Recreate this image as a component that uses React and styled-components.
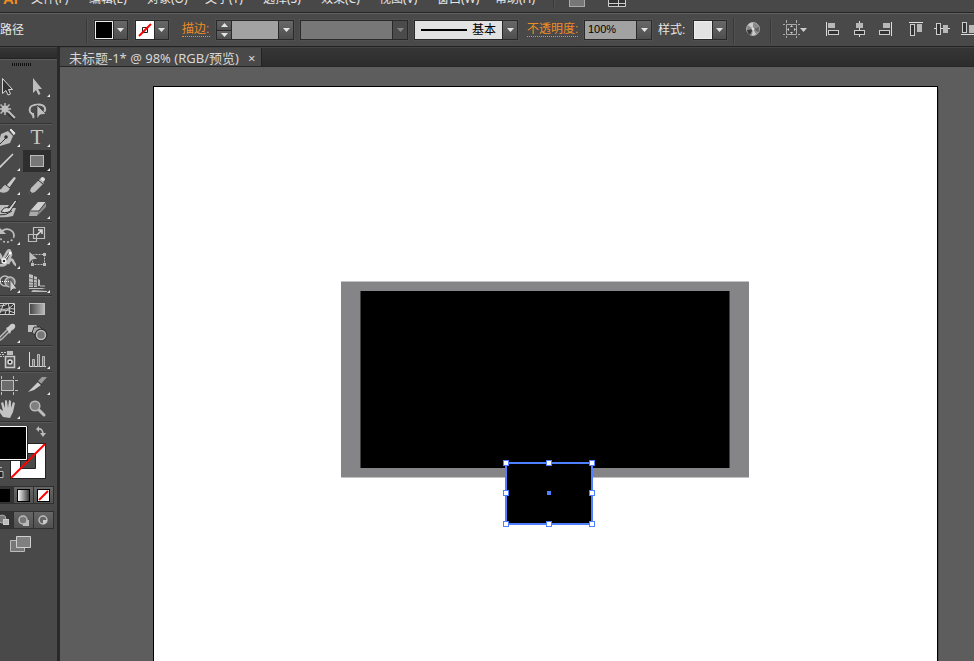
import React, { useState } from 'react';
import styled, { createGlobalStyle, css } from 'styled-components';

const GlobalStyle = createGlobalStyle`
    body {
        margin: 0;
        background: #5d5d5d;
        overflow: hidden;
    }

    * {
        box-sizing: border-box;
    }

    button, input, select {
        margin: 0;
        padding: 0;
        border: 0;
        border-radius: 0;
        background: none;
        color: inherit;
        font: inherit;
        appearance: none;
    }

    svg {
        display: block;
        flex: none;
    }
`;

const Window = styled.div`
    height: 100vh;
    display: flex;
    flex-direction: column;
    color: #e6e6e6;
    font-family: "Liberation Sans", "Noto Sans CJK SC", sans-serif;
    font-size: 12px;
    line-height: 16px;
`;

/* menu bar */

const MenuBar = styled.header`
    height: 13px;
    flex: none;
    display: flex;
    align-items: flex-end;
    padding: 0 0 5px 3px;
    overflow: hidden;
    background: #484848;
    border-bottom: 1px solid #242424;
`;

const Logo = styled.span`
    width: 28px;
    color: #f28c1e;
    font-size: 15px;
    font-weight: bold;
`;

const MenuItem = styled.button`
    width: 58px;
    flex: none;
    text-align: left;
    font-family: "Noto Sans", "Noto Sans CJK SC", sans-serif;
    line-height: 16px;
    white-space: nowrap;
`;

const BarIcon = styled.button`
    flex: none;
    margin-left: ${({ $gap }) => $gap}px;
`;

/* control bar */

const ControlBar = styled.section`
    height: 34px;
    flex: none;
    display: flex;
    align-items: center;
    gap: 6px;
    overflow: hidden;
    background: #494949;
    border-top: 1px solid #626262;
    border-bottom: 1px solid #222;
`;

const Label = styled.label`
    flex: none;
    width: ${({ $width }) => $width}px;
    white-space: nowrap;
`;

const LinkLabel = styled.a`
    flex: none;
    margin-left: ${({ $gap }) => $gap || 0}px;
    width: ${({ $width }) => $width}px;
    line-height: 13px;
    color: #f08c26;
    text-decoration: none;
    border-bottom: 1px dotted #f08c26;
    white-space: nowrap;
`;

const Divider = styled.span`
    flex: none;
    width: 2px;
    height: 25px;
    background: #383838;
    border-right: 1px solid #525252;
`;

const Field = styled.div`
    flex: none;
    display: flex;
    width: ${({ $width }) => $width}px;
    height: 20px;
    margin-left: ${({ $gap }) => $gap || 0}px;
    border: 1px solid #292929;
    background: ${({ $tone }) => $tone || '#a2a2a2'};
    color: #000;
    outline: 1px solid #505050;

    input, select {
        flex: 1;
        min-width: 0;
        padding-left: 3px;
        line-height: 16px;
    }

    input {
        padding-bottom: 2px;
        font-size: 11px;
    }
`;

const Swatch = styled.span`
    flex: none;
    width: 18px;
    border: 1px solid #eee;
    background: ${({ $color }) => $color};
`;

const Drop = styled.button`
    flex: 0 1 15px;
    min-width: 0;
    display: flex;
    align-items: center;
    justify-content: center;
    border-left: 1px solid #292929;
    background: ${({ $off }) => ($off ? '#4b4b4b' : 'linear-gradient(#686868, #4e4e4e)')};
    color: ${({ $off }) => ($off ? '#858585' : '#e4e4e4')};
`;

const Spinner = styled.div`
    width: 15px;
    display: flex;
    flex-direction: column;
    border-right: 1px solid #292929;

    button {
        flex: 1;
        display: flex;
        align-items: center;
        justify-content: center;
        background: linear-gradient(#646464, #505050);
        color: #e4e4e4;
    }

    button + button {
        border-top: 1px solid #292929;
    }
`;

const BrushLine = styled.span`
    align-self: center;
    width: 46px;
    height: 2px;
    margin: 0 2px 0 6px;
    background: #000;
`;

const IconButton = styled.button`
    flex: none;
    width: 20px;
    height: 20px;
    margin-left: ${({ $gap }) => $gap || 0}px;
`;

/* work area */

const Body = styled.div`
    flex: 1;
    min-height: 0;
    display: flex;
`;

const ToolPanel = styled.aside`
    width: 60px;
    flex: none;
    overflow: hidden;
    background: #494949;
    border-right: 3px solid #292929;
`;

const PanelHead = styled.div`
    height: 12px;
    background: linear-gradient(#363636, #2c2c2c);
    border-top: 1px solid #444;
    border-bottom: 1px solid #222;
`;

const Grip = styled.div`
    height: 16px;
    padding: 3px 0 0 12px;
    border-top: 1px solid #5c5c5c;

    &::before {
        content: '';
        display: block;
        width: 19px;
        height: 3px;
        background: repeating-linear-gradient(90deg, #111 0 1px, #494949 1px 2px);
    }
`;

const ToolGroup = styled.div`
    display: grid;
    grid-template-columns: 30px 30px;
    margin: 0 5px 0 -8px;
    border-bottom: 1px solid #585858;
    box-shadow: inset 0 -1px #333;
    padding-bottom: 1px;
`;

const ToolButton = styled.button`
    height: 24px;

    ${({ $active }) => $active && css`
        background: #2e2e2e;
        background-clip: content-box;
        padding: 1px;

        svg {
            margin: -1px;
        }
    `}
`;

const FillStroke = styled.button`
    display: block;
`;

const ModeRow = styled.div`
    display: flex;
    width: 54px;
    height: 18px;
    margin-top: 7px;
    border: 1px solid #303030;
    border-left: 0;
`;

const Mode = styled.button`
    flex: none;
    width: ${({ $first }) => ($first ? 13 : 20)}px;
    display: flex;
    align-items: center;
    justify-content: ${({ $first }) => ($first ? 'flex-start' : 'center')};
    overflow: hidden;
    background: ${({ $first }) => ($first ? '#343434' : 'linear-gradient(#666, #515151)')};

    & + & {
        border-left: 1px solid #303030;
    }
`;

const ScreenMode = styled.button`
    margin: 6px 0 0 9px;
`;

const Documents = styled.main`
    flex: 1;
    min-width: 0;
    display: flex;
    flex-direction: column;
`;

const TabStrip = styled.div`
    height: 20px;
    flex: none;
    display: flex;
    background: linear-gradient(#363636, #2c2c2c);
    border-top: 1px solid #444;
    border-bottom: 1px solid #262626;
`;

const Tab = styled.div`
    display: flex;
    align-items: center;
    gap: 9px;
    padding: 2px 6px 0 9px;
    background: #494949;
    border-right: 1px solid #222;
    color: #d6d6d6;
    font-family: "Noto Sans", "Noto Sans CJK SC", sans-serif;
    font-size: 13px;
    white-space: nowrap;
`;

const Canvas = styled.div`
    flex: 1;
    min-height: 0;
    display: flex;
    padding: 19px 36px 0 93px;
    background: #5d5d5d;
`;

const Artboard = styled.div`
    flex: 1;
    min-width: 0;
    overflow: hidden;
    background: #fff;
    border: 1px solid #000;
    border-bottom: 0;
    box-shadow: 1px 3px #4a4a4a;
`;

const Down = ({ up }) => (
    <svg width="7" height="4" viewBox="0 0 7 4" fill="currentColor">
        <path d={up ? 'M0 4L3.500 0L7 4z' : 'M0 0H7L3.500 4z'} />
    </svg>
);

const Corner = () => <path d="M28 19v3h-3z" fill="#e8e8e8" />;

const G = '#bdbdbd';
const D = '#303030';

const tools = [
    [
        { name: '选择工具', art: <path d="M10.500 3.500v15l3.500-3 2 4.500 2.500-1-2-4.500h4z" fill="#333" stroke="#d6d6d6" /> },
        { name: '直接选择工具', corner: true, art: <path d="M11 3v15l3-3 2.500 5 2-1-2.300-5H20z" fill={G} /> },
        {
            name: '魔棒工具', art: <>
                <path d="M13 4v12M7 10h12M8.500 5.500l9 9M17.500 5.500l-9 9" stroke={G} strokeWidth="1.500" />
                <circle cx="13" cy="10" r="3.500" fill={G} />
                <path d="M16 13l7 7" stroke={D} strokeWidth="4" />
                <path d="M16 12l7 7" stroke={G} strokeWidth="2.200" />
            </>
        },
        {
            name: '套索工具', art: <>
                <path d="M12 15c-4 0-5-3-4-6 1.500-4 13-5 15 0 .7 3-.5 4-3 5M9 13c0 3 4 2 2 6" fill="none" stroke={G} strokeWidth="2" />
                <path d="M15 6v14l3-4 6-1z" fill={G} stroke={D} strokeWidth=".6" />
            </>
        },
    ],
    [
        {
            name: '钢笔工具', corner: true, art: <>
                <path d="M6 20l3-11 7-3 5 5-3 7-10 3z" fill={G} />
                <path d="M17 5l2-2 5 5-2 3z" fill="#ddd" stroke={D} strokeWidth=".7" />
                <path d="M7 20l7-7" stroke={D} /><circle cx="14" cy="12" r="1.800" fill={D} />
            </>
        },
        { name: '文字工具', corner: true, art: <text x="15" y="19" textAnchor="middle" fontFamily="Liberation Serif, serif" fontSize="21" fill="#c8c8c8">T</text> },
        { name: '直线段工具', corner: true, art: <path d="M7 19L21 5" stroke="#d0d0d0" strokeWidth="1.600" /> },
        { name: '矩形工具', corner: true, art: <rect x="8.500" y="6.500" width="13" height="11" fill="#777" stroke="#bbb" /> },
        {
            name: '画笔工具', corner: true, art: <>
                <path d="M14 13L22 4l2 1-7 10z" fill="#ccc" />
                <path d="M15 12c-5-1-4 5-9 5 2 4 10 4 12-2z" fill={G} />
                <path d="M14 12l4 3" stroke={D} />
            </>
        },
        {
            name: '铅笔工具', corner: true, art: <>
                <path d="M7 21l2-6 9-9 4 4-9 9z" fill={G} />
                <path d="M18 6l2-2q3 0 3 3l-2 2z" fill="#ddd" />
                <path d="M16 7l5 4" stroke={D} />
                <path d="M7 21l1-3 2 2z" fill={D} />
            </>
        },
        {
            name: '斑点画笔工具', art: <>
                <path d="M3 8h14l-2 3h9l-3 8q-8 2-15 1z" fill={G} />
                <path d="M9 15q3-6 8-4l6-8 2 1-6 9q-3 4-10 2z" fill="#d2d2d2" stroke={D} strokeWidth="1" />
                <path d="M6 18q8 1 14-4" fill="none" stroke={D} />
            </>
        },
        {
            name: '橡皮擦工具', corner: true, art: <>
                <path d="M8 14l8-9h8l-7 9z" fill="#d0d0d0" />
                <path d="M8 14h9l-2 5H7z" fill="#aaa" />
                <path d="M17 14l7-9v5l-9 9z" fill="#8c8c8c" />
                <path d="M8 14h9l7-9" fill="none" stroke="#444" />
            </>
        },
    ],
    [
        {
            name: '旋转工具', corner: true, art: <>
                <path d="M10 8c5-4 12-1 12 5" fill="none" stroke={G} strokeWidth="1.800" />
                <path d="M22 13c-1 7-12 9-14 1" fill="none" stroke={G} strokeWidth="1.600" strokeDasharray="2 2" />
                <path d="M8 5v6h6z" fill={G} />
            </>
        },
        {
            name: '比例缩放工具', corner: true, art: <>
                <path d="M11.500 4.500h11v11h-11zM6.500 11.500h8v7h-8z" fill="none" stroke={G} strokeWidth="1.200" />
                <path d="M15 12l4-4M16 7h4v4" fill="none" stroke="#e0e0e0" strokeWidth="1.500" />
            </>
        },
        {
            name: '宽度工具', corner: true, art: <>
                <path d="M4 7q4-2 5 3t5-3 5 1l-3 6q-4 7-11 3M16 17q3-7 5-3t3 4" fill="none" stroke={G} strokeWidth="2.600" />
                <path d="M12 14l6-8" stroke="#fff" />
                <circle cx="12" cy="14" r="2" fill={D} stroke="#fff" strokeWidth="1.300" />
                <circle cx="18" cy="6" r="1.500" fill="#fff" />
            </>
        },
        {
            name: '自由变换工具', art: <>
                <rect x="10.500" y="7.500" width="12" height="10" fill="none" stroke={G} strokeDasharray="2 1" />
                <path d="M21 6h3v3h-3zM9 16h3v3H9zM21 16h3v3h-3z" fill={G} />
                <path d="M7 4v13l3-4 6-1z" fill={G} stroke={D} strokeWidth=".7" />
            </>
        },
        {
            name: '形状生成器工具', corner: true, art: <>
                <circle cx="13" cy="10" r="5" fill="none" stroke={G} strokeWidth="1.500" />
                <circle cx="18" cy="11" r="5" fill="#777" stroke={G} strokeWidth="1.500" />
                <path d="M6 10.500h14" stroke="#fff" strokeDasharray="1 1" />
                <path d="M18 8v13l3-3h4z" fill="#ccc" stroke={D} strokeWidth=".7" />
            </>
        },
        {
            name: '透视网格工具', corner: true, art: <>
                <path d="M7 3l4 1v12H7zM12 5l3 1v10h-3zM16 8l2 1v6h-2z" fill={G} />
                <path d="M7 17h13l4 1H7zM11 19l14 1v1H9z" fill={G} />
                <path d="M7 7l8 2M7 11l8 1M7 14h9" stroke="#555" strokeWidth=".8" />
                <path d="M18 15h5" stroke={G} />
            </>
        },
    ],
    [
        {
            name: '网格工具', art: <>
                <rect x="7" y="6" width="16" height="12" fill="#333" />
                <path d="M7.500 6.500h15v11h-15zM8 9q6 0 8-3M8 12q8 2 14-5M13 18q0-8 10-6M8 16l4-10M17 18q2-5-1-12M8 14q8-2 15 2" fill="none" stroke="#d0d0d0" />
            </>
        },
        { name: '渐变工具', art: <rect x="7.500" y="6.500" width="15" height="11" fill="url(#toolFade)" stroke={G} /> },
        {
            name: '吸管工具', corner: true, art: <>
                <path d="M7 20l1-4 8-8 2 2-8 8z" fill="#555" stroke={G} strokeWidth="1.300" />
                <path d="M14 7l2-1 3-3q3-1 4 1t-1 4l-3 2-1 3z" fill="#ccc" />
            </>
        },
        {
            name: '混合工具', art: <>
                <path d="M6 4h8l1 1v6H6z" fill={G} />
                <path d="M12 6h6l3 3v6h-6l-5-3z" fill="#aaa" stroke={D} />
                <circle cx="19" cy="14" r="5" fill="#777" stroke={D} strokeWidth="3" />
                <circle cx="19" cy="14" r="4.500" fill="#777" stroke={G} strokeWidth="1.500" />
            </>
        },
    ],
    [
        {
            name: '符号喷枪工具', corner: true, art: <>
                <path d="M13.500 9.500h9v11h-9z" fill="#555" stroke="#ccc" strokeWidth="1.500" />
                <path d="M15 4h6v4h-6z" fill={G} />
                <circle cx="18" cy="15" r="2" fill="#222" stroke="#ddd" strokeWidth="1.500" />
                <path d="M6 5.500h8M7 7.500h6M8 9.500h4" stroke="#ccc" strokeDasharray="2 1" />
            </>
        },
        {
            name: '柱形图工具', corner: true, art: <>
                <path d="M7.500 5v14.500H24" fill="none" stroke="#ddd" />
                <path d="M10.500 12.500h2v7h-2zM15.500 7.500h2v12h-2zM20.500 9.500h2v10h-2z" fill="#777" stroke="#bbb" />
            </>
        },
    ],
    [
        {
            name: '画板工具', art: <>
                <rect x="9.500" y="7.500" width="12" height="10" fill="#6c6c6c" stroke={G} />
                <path d="M9.500 3v3M21.500 3v3M9.500 19v3M21.500 19v3M5 7.500h3M23 7.500h3M5 17.500h3M23 17.500h3" stroke={G} />
            </>
        },
        {
            name: '切片工具', corner: true, art: <>
                <path d="M6 19l10-10 3 3-7 5z" fill="#ccc" />
                <path d="M16 8l4-4h5l-6 7z" fill="#999" />
                <path d="M15 8l5 4" stroke={D} />
            </>
        },
        {
            name: '抓手工具', corner: true, art: <path d="M11 20l-5-7 1-2 4 3-2-8 2-1 2 6V4q1-2 2 0l1 7 1-8 2 1v7l2-6 2 1-2 9-3 6z" fill="#c4c4c4" />
        },
        {
            name: '缩放工具', art: <>
                <path d="M17 13l5 5" stroke={G} strokeWidth="3" strokeLinecap="round" />
                <circle cx="13" cy="9" r="4.800" fill="#808080" stroke="#bbb" strokeWidth="1.500" />
            </>
        },
    ],
];

const aligns = [
    { name: '水平左对齐', art: <path d="M2.500 2v14" stroke="#ddd" />, a: [4, 3, 7, 4], b: [4, 10, 11, 4] },
    { name: '水平居中对齐', art: <path d="M9.500 1v16" stroke="#ddd" />, a: [6, 3, 7, 4], b: [4, 10, 11, 4] },
    { name: '水平右对齐', art: <path d="M15.500 2v14" stroke="#ddd" />, a: [7, 3, 7, 4], b: [3, 10, 11, 4] },
    { name: '垂直顶对齐', gap: 5, art: <path d="M2 2.500h14" stroke="#ddd" />, a: [10, 4, 5, 7], b: [3, 4, 5, 11] },
    { name: '垂直居中对齐', art: <path d="M1 8.500h16" stroke="#ddd" />, a: [10, 5, 5, 7], b: [3, 3, 5, 11] },
    { name: '垂直底对齐', art: <path d="M2 14.500h15" stroke="#ddd" />, a: [10, 5, 5, 7], b: [3, 2, 5, 10] },
];

const menus = ['文件(F)', '编辑(E)', '对象(O)', '文字(T)', '选择(S)', '效果(C)', '视图(V)', '窗口(W)', '帮助(H)'];

function Controls() {
    const [opacity, setOpacity] = useState('100%');
    const [weight, setWeight] = useState('');

    return (
        <ControlBar>
            <Label as="span" $width={80}>路径</Label>
            <Divider />
            <Field as="button" $width={34} aria-label="填色">
                <Swatch $color="#000" />
                <Drop as="span"><Down /></Drop>
            </Field>
            <Field as="button" $width={34} $gap={1} aria-label="描边颜色">
                <svg width="18" height="18" viewBox="0 0 18 18">
                    <path d="M0 0h18v18H0z" fill="#fff" />
                    <path d="M6.500 6.500h5v5h-5z" fill="#fff" stroke="#222" />
                    <path d="M3 15L15 3" stroke="#f00" strokeWidth="2" />
                </svg>
                <Drop as="span"><Down /></Drop>
            </Field>
            <LinkLabel href="#stroke" $gap={7} $width={28}>描边:</LinkLabel>
            <Field $width={78}>
                <Spinner>
                    <button aria-label="增加"><Down up /></button>
                    <button aria-label="减少"><Down /></button>
                </Spinner>
                <input aria-label="描边粗细" value={weight} onChange={(e) => setWeight(e.target.value)} />
                <Drop aria-label="描边粗细选项"><Down /></Drop>
            </Field>
            <Field $width={108} $tone="#777">
                <select aria-label="变量宽度配置文件" disabled />
                <Drop as="span" $off><Down /></Drop>
            </Field>
            <Field $width={104} $tone="#e2e2e2">
                <BrushLine />
                <select aria-label="画笔定义"><option>基本</option></select>
                <Drop as="span"><Down /></Drop>
            </Field>
            <LinkLabel href="#opacity" $gap={3} $width={51}>不透明度:</LinkLabel>
            <Field $width={68}>
                <input aria-label="不透明度" value={opacity} onChange={(e) => setOpacity(e.target.value)} />
                <Drop aria-label="不透明度选项"><Down /></Drop>
            </Field>
            <Label htmlFor="style" $width={29}>样式:</Label>
            <Field as="button" id="style" $width={34}>
                <Swatch $color="#e2e2e2" />
                <Drop as="span"><Down /></Drop>
            </Field>
            <Divider />
            <IconButton $gap={3} aria-label="重新着色图稿">
                <svg width="20" height="20" viewBox="0 0 20 20">
                    <circle cx="9" cy="9" r="6.500" fill="#8a8a8a" stroke="#aaa" />
                    <path d="M9 9L4 5q3-3 5-2zM9 9l3 5q-2 2-4 1z" fill="#ccc" />
                    <path d="M9 9l-6 1q0 3 3 5z" fill="#3a3a3a" />
                    <path d="M9 9l6-2q1 4-1 5z" fill="#666" />
                    <circle cx="9" cy="9" r="1.500" fill="#ddd" />
                </svg>
            </IconButton>
            <Divider />
            <IconButton $gap={5} aria-label="对齐所选对象">
                <svg width="26" height="20" viewBox="0 0 26 20" overflow="visible">
                    <path d="M3.500 4.500h10v10h-10zM3.500 0v3M13.500 0v3M3.500 16v2M13.500 16v2M0 4.500h2M15 4.500h2M0 14.500h2M15 14.500h2" stroke="#aaa" fill="none" />
                    <path d="M7 7h3L8.500 5zM7 12h3l-1.500 2zM6 8v3L4 9.500zM11 8v3l2-1.500z" fill="#ccc" />
                    <path d="M17 8h7l-3.500 4z" fill="#ccc" />
                </svg>
            </IconButton>
            {aligns.map((item, i) => (
                <IconButton key={item.name} $gap={i === 0 ? 15 : item.gap} aria-label={item.name}>
                    <svg width="20" height="20" viewBox="0 0 20 20">
                        {item.art}
                        <rect x={item.a[0]} y={item.a[1]} width={item.a[2]} height={item.a[3] + 1} fill="#b8b8b8" />
                        <rect x={item.b[0] + 0.5} y={item.b[1] + 0.5} width={item.b[2] - 1} height={item.b[3]} fill="#333" stroke="#ccc" />
                    </svg>
                </IconButton>
            ))}
        </ControlBar>
    );
}

function Tools() {
    const [active, setActive] = useState('矩形工具');

    return (
        <ToolPanel>
            <PanelHead />
            <Grip />
            {tools.map((group) => (
                <ToolGroup key={group[0].name}>
                    {group.map((tool) => (
                        <ToolButton
                            key={tool.name}
                            aria-label={tool.name}
                            $active={tool.name === active}
                            onClick={() => setActive(tool.name)}
                        >
                            <svg width="30" height="24" viewBox="0 0 30 24">
                                <defs>
                                    <linearGradient id="toolFade"><stop stopColor="#444" /><stop offset="1" stopColor="#bbb" /></linearGradient>
                                </defs>
                                {tool.art}
                                {tool.corner && <Corner />}
                            </svg>
                        </ToolButton>
                    ))}
                </ToolGroup>
            ))}
            <FillStroke aria-label="填色和描边">
                <svg width="52" height="56" viewBox="0 0 52 56">
                    <path d="M10 20h36v36H10z" fill="#222" />
                    <path d="M11 21h34v34H11z" fill="#fff" />
                    <path d="M20.500 30.500h15v15h-15z" fill="#494949" stroke="#222" />
                    <path d="M11 55L45 21" stroke="#f00" strokeWidth="2" />
                    <path d="M0 3h28v35H0z" fill="#222" />
                    <path d="M-2 3.500h28.500v33H-2z" fill="#000" stroke="#fff" />
                    <path d="M38 6q5-1 5 6" fill="none" stroke="#bbb" strokeWidth="1.500" />
                    <path d="M39 3v6l-3-3zM40 10h6l-3 4z" fill="#bbb" />
                    <path d="M0 44.500h2M-2 48.500h5v6h-5z" fill="#222" stroke="#bbb" />
                </svg>
            </FillStroke>
            <ModeRow>
                <Mode $first aria-label="颜色"><svg width="10" height="13"><rect width="10" height="13" fill="#000" /></svg></Mode>
                <Mode aria-label="渐变">
                    <svg width="13" height="13">
                        <defs><linearGradient id="modeFade"><stop stopColor="#fff" /><stop offset="1" stopColor="#333" /></linearGradient></defs>
                        <rect x=".5" y=".5" width="12" height="12" fill="url(#modeFade)" stroke="#000" />
                    </svg>
                </Mode>
                <Mode aria-label="无">
                    <svg width="13" height="13"><rect x=".5" y=".5" width="12" height="12" fill="#fff" stroke="#000" /><path d="M2 11l9-9" stroke="#f00" strokeWidth="2" /></svg>
                </Mode>
            </ModeRow>
            <ModeRow>
                <Mode $first aria-label="正常绘图"><svg width="12" height="13"><circle cx="2" cy="5" r="4" fill="#777" stroke="#aaa" /><rect x="3.500" y="5.500" width="5" height="5" fill="#bbb" stroke="#ccc" /></svg></Mode>
                <Mode aria-label="背面绘图"><svg width="13" height="13"><rect x="6" y="6" width="6" height="6" fill="#bbb" /><circle cx="6" cy="6" r="4" fill="#777" stroke="#bbb" strokeWidth="1.500" /></svg></Mode>
                <Mode aria-label="内部绘图"><svg width="13" height="13"><circle cx="6" cy="6" r="4" fill="#666" stroke="#bbb" strokeWidth="1.500" /><path d="M6 6h4v1q-1 3-4 3z" fill="#ccc" /></svg></Mode>
            </ModeRow>
            <ScreenMode aria-label="更改屏幕模式">
                <svg width="24" height="19" viewBox="0 0 24 19">
                    <path d="M1.500 5.500h14v11h-14z" fill="#777" stroke="#bbb" />
                    <path d="M7.500 1.500h14v11h-14z" fill="#808080" stroke="#d0d0d0" />
                </svg>
            </ScreenMode>
        </ToolPanel>
    );
}

const handles = [[352, 376], [395, 376], [438, 376], [352, 406], [438, 406], [352, 437], [395, 437], [438, 437]];

function Drawing() {
    return (
        <svg width="783" height="574" viewBox="0 0 783 574">
            <rect x="187" y="194.500" width="408" height="196" fill="#858587" />
            <rect x="206.500" y="204" width="369" height="177" fill="#000" />
            <rect x="352" y="376" width="86" height="61" fill="#000" stroke="#4f80ff" strokeWidth="2" />
            <rect x="393" y="404" width="4" height="4" fill="#4f80ff" />
            {handles.map(([x, y]) => (
                <rect key={`${x}-${y}`} x={x - 2.5} y={y - 2.5} width="5" height="5" fill="#fff" stroke="#4f80ff" />
            ))}
        </svg>
    );
}

function App() {
    return (
        <Window>
            <GlobalStyle />
            <MenuBar>
                <Logo>Ai</Logo>
                {menus.map((menu) => <MenuItem key={menu}>{menu}</MenuItem>)}
                <Divider />
                <BarIcon $gap={14} aria-label="转到 Bridge">
                    <svg width="16" height="12"><rect x=".5" y=".5" width="15" height="11" fill="#777" stroke="#aaa" /></svg>
                </BarIcon>
                <BarIcon $gap={23} aria-label="排列文档">
                    <svg width="18" height="12"><path d="M.5.5h17v11H.5zM10.500 0v11M0 8.500h17" fill="#333" stroke="#ccc" /></svg>
                </BarIcon>
            </MenuBar>
            <Controls />
            <Body>
                <Tools />
                <Documents>
                    <TabStrip>
                        <Tab>
                            <span>未标题-1* @ 98% (RGB/预览)</span>
                            <button aria-label="关闭">×</button>
                        </Tab>
                    </TabStrip>
                    <Canvas>
                        <Artboard><Drawing /></Artboard>
                    </Canvas>
                </Documents>
            </Body>
        </Window>
    );
}

export default App;
